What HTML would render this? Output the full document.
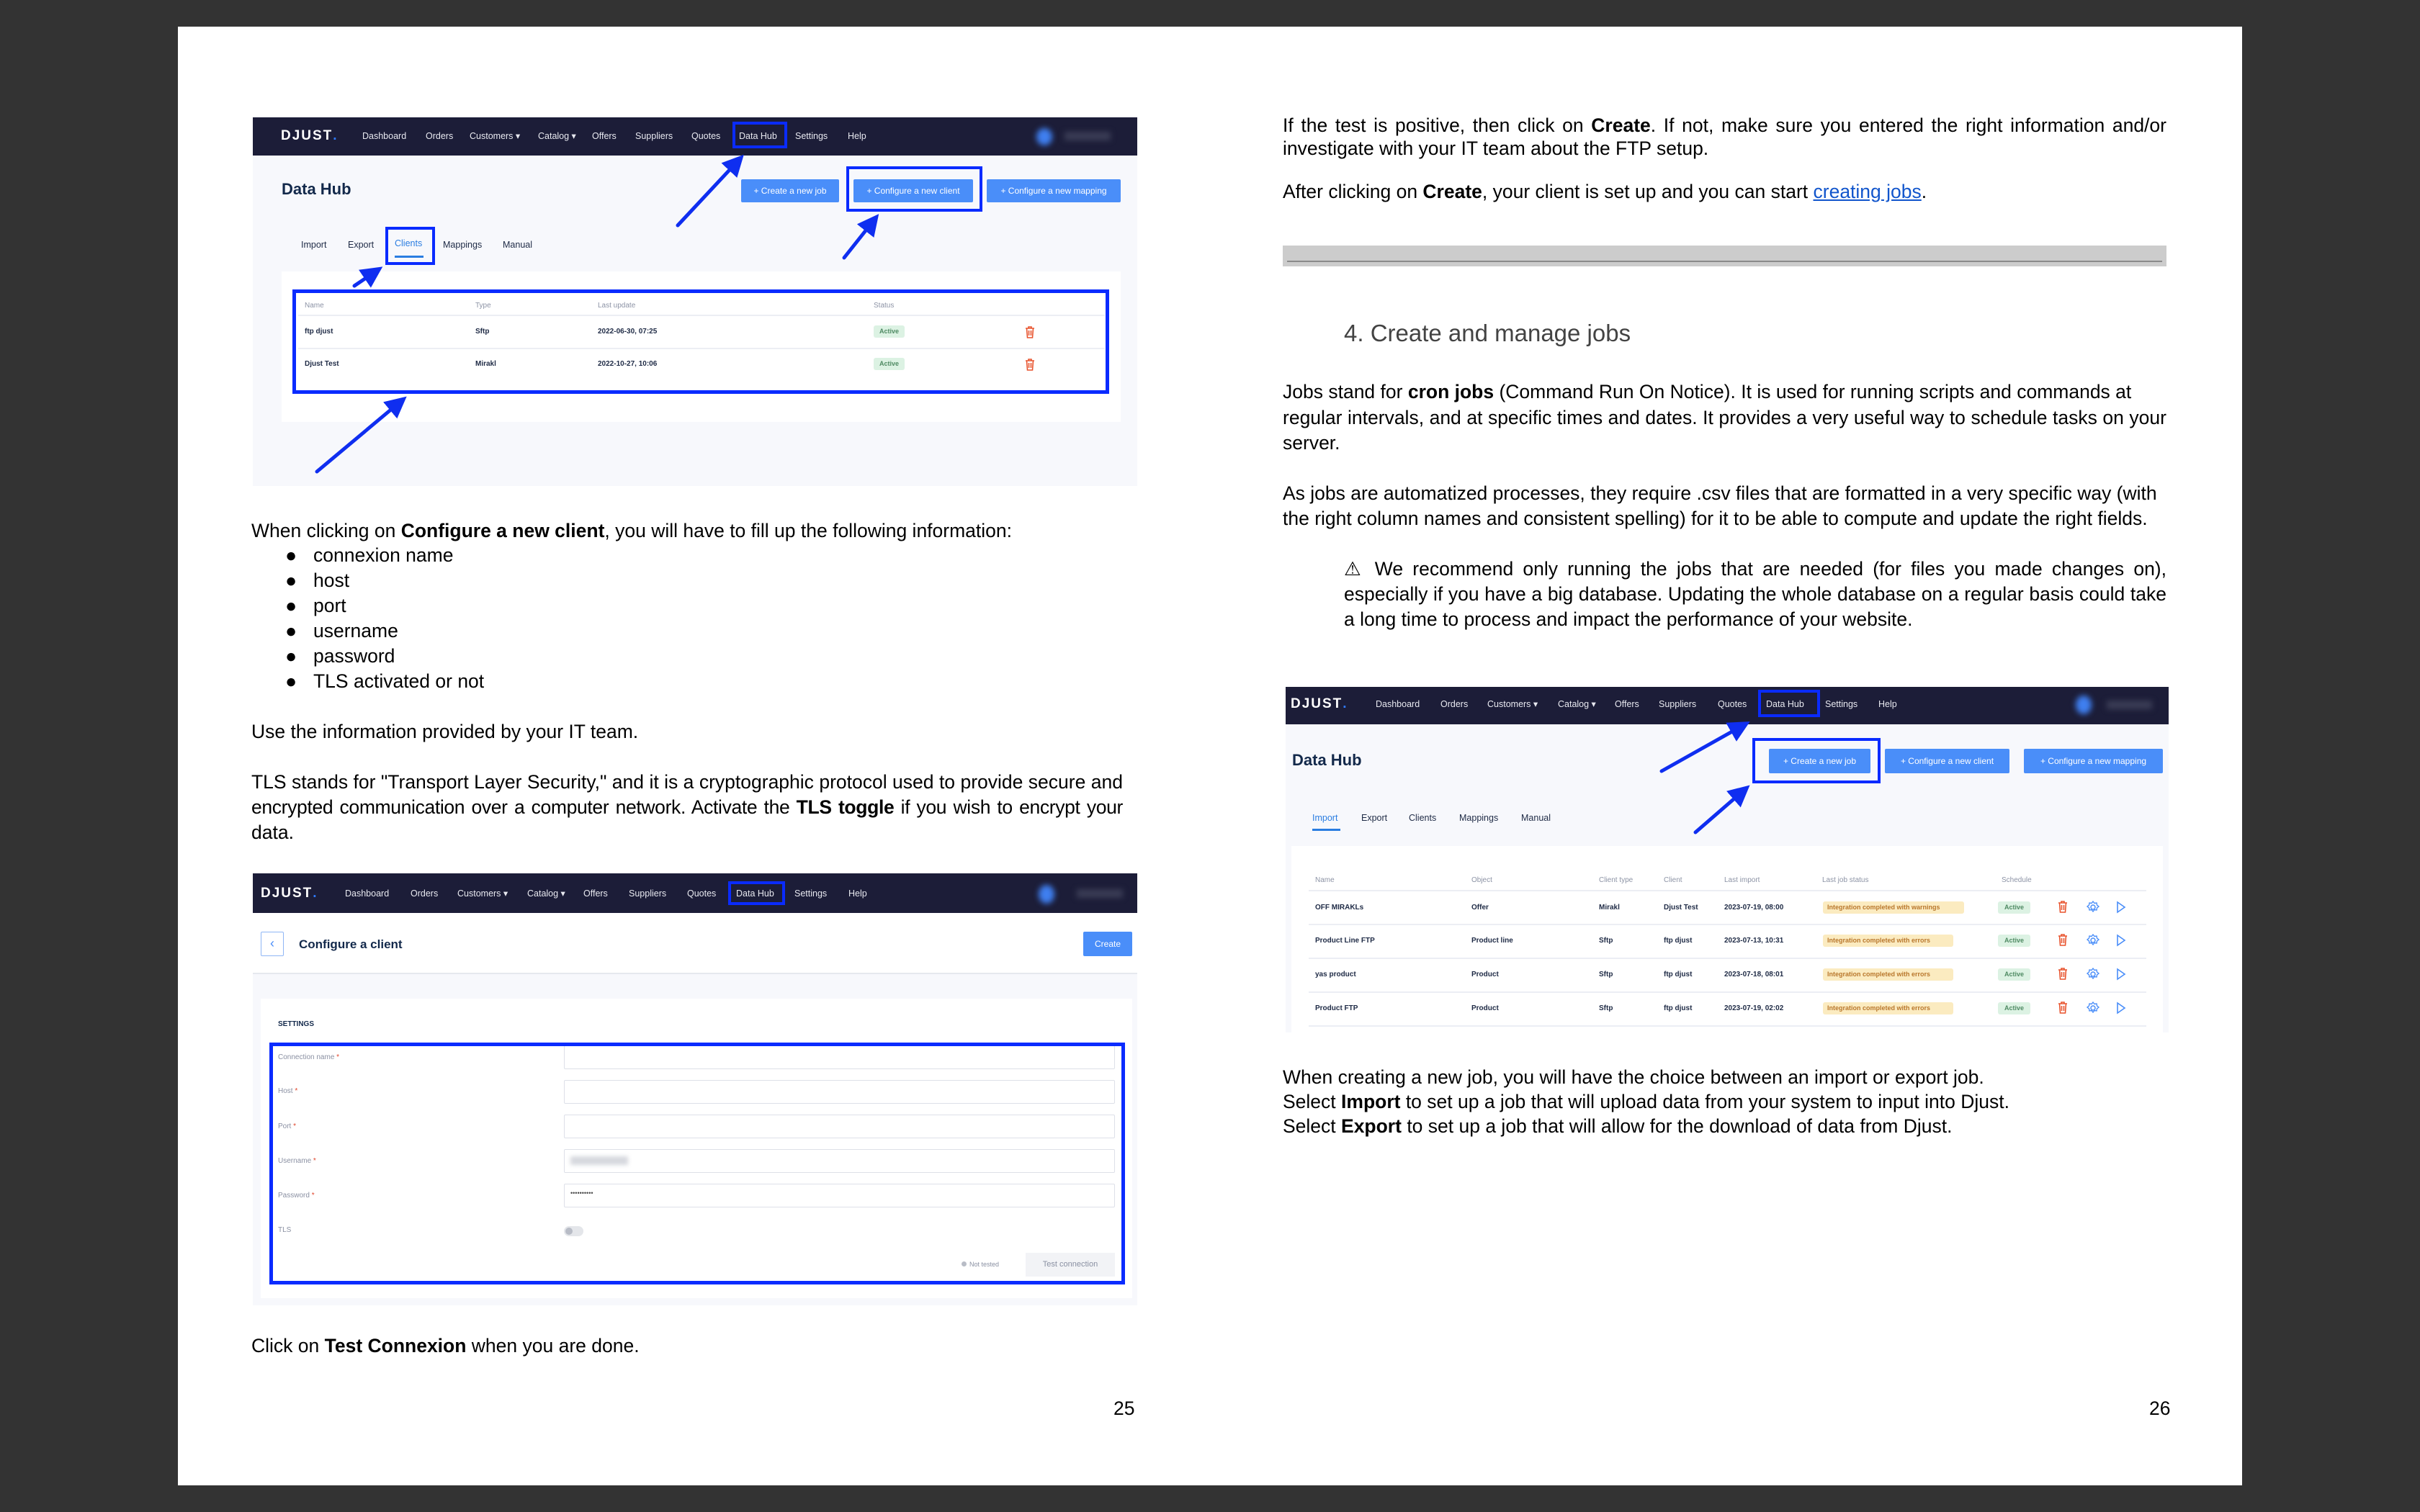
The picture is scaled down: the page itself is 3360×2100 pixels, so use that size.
<!DOCTYPE html>
<html><head><meta charset="utf-8">
<style>
*{margin:0;padding:0;box-sizing:border-box}
html,body{width:3360px;height:2100px;overflow:hidden;background:#333333}
body{position:relative;font-family:"Liberation Sans",Arial,sans-serif;color:#000}
.page{position:absolute;left:247px;top:37px;width:2866px;height:2026px;background:#fff}
.a{position:absolute;white-space:nowrap}
.t{position:absolute;font-size:26.5px;line-height:35px;white-space:nowrap}
.j{position:absolute;font-size:26.5px;line-height:35px;height:35px;overflow:visible;text-align:justify;text-align-last:justify;white-space:normal}
.s{position:absolute;font-family:"Liberation Sans",Arial,sans-serif}
.nav{background:#1c1d38}
.ni{position:absolute;color:#e8e9f0;font-size:12.5px;line-height:16px;white-space:nowrap}
.logo{position:absolute;color:#fff;font-weight:bold;font-size:19px;letter-spacing:2px;line-height:20px}
.logo b{color:#2f7bff}
.hb{position:absolute;border:4px solid #0a2bff}
.btn{position:absolute;background:#4a8ef9;color:#fff;font-size:12px;text-align:center;border-radius:2px}
.th{position:absolute;color:#8c93a5;font-size:10px;line-height:12px;white-space:nowrap}
.td{position:absolute;color:#1e2a45;font-size:10px;font-weight:bold;line-height:12px;white-space:nowrap}
.hl{position:absolute;height:2px;background:#eceef4}
.act{position:absolute;background:#dcf2e3;color:#4f8a63;font-size:9px;font-weight:bold;text-align:center;border-radius:3px}
.warn{position:absolute;background:#fbebc0;color:#b9772c;font-size:9px;font-weight:bold;border-radius:3px;padding-left:6px;white-space:nowrap}
.lbl{position:absolute;color:#8a90a2;font-size:10px;line-height:12px}
.lbl b{color:#e0452b;font-weight:normal}
.inp{position:absolute;background:#fff;border:1.5px solid #dde0e8;border-radius:2px}
</style></head><body>
<div class="page"></div>

<!-- Screenshot 1 -->
<div class="s" style="left:351px;top:161px;width:1228px;height:514px;background:#f7f8fc"></div>
<div class="s nav" style="left:351px;top:163px;width:1228px;height:53px"></div>
<div class="logo" style="left:390px;top:179px">DJUST<b>.</b></div>
<div class="ni" style="left:503px;top:181px">Dashboard</div>
<div class="ni" style="left:591px;top:181px">Orders</div>
<div class="ni" style="left:652px;top:181px">Customers ▾</div>
<div class="ni" style="left:747px;top:181px">Catalog ▾</div>
<div class="ni" style="left:822px;top:181px">Offers</div>
<div class="ni" style="left:882px;top:181px">Suppliers</div>
<div class="ni" style="left:960px;top:181px">Quotes</div>
<div class="ni" style="left:1026px;top:181px">Data Hub</div>
<div class="ni" style="left:1104px;top:181px">Settings</div>
<div class="ni" style="left:1177px;top:181px">Help</div>
<div class="hb" style="left:1017px;top:169px;width:76px;height:37px"></div>
<div class="s" style="left:1439px;top:178px;width:22px;height:24px;border-radius:50%;background:#3f7ff0;filter:blur(4px)"></div>
<div class="s" style="left:1478px;top:183px;width:64px;height:12px;background:#3a3c55;filter:blur(4px)"></div>
<div class="a" style="left:391px;top:250px;font-size:22px;font-weight:bold;color:#13294b">Data Hub</div>
<div class="btn" style="left:1029px;top:249px;width:136px;height:32px;line-height:32px">+ Create a new job</div>
<div class="btn" style="left:1185px;top:249px;width:166px;height:32px;line-height:32px">+ Configure a new client</div>
<div class="btn" style="left:1370px;top:249px;width:186px;height:32px;line-height:32px">+ Configure a new mapping</div>
<div class="hb" style="left:1175px;top:231px;width:189px;height:63px"></div>
<div class="ni" style="left:418px;top:332px;color:#1e2a45">Import</div>
<div class="ni" style="left:483px;top:332px;color:#1e2a45">Export</div>
<div class="ni" style="left:548px;top:330px;color:#2a7de1">Clients</div>
<div class="ni" style="left:615px;top:332px;color:#1e2a45">Mappings</div>
<div class="ni" style="left:698px;top:332px;color:#1e2a45">Manual</div>
<div class="s" style="left:548px;top:355px;width:40px;height:3px;background:#2a7de1"></div>
<div class="hb" style="left:535px;top:315px;width:69px;height:53px"></div>
<div class="s" style="left:391px;top:377px;width:1165px;height:209px;background:#fff"></div>
<div class="th" style="left:423px;top:419px">Name</div>
<div class="th" style="left:660px;top:419px">Type</div>
<div class="th" style="left:830px;top:419px">Last update</div>
<div class="th" style="left:1213px;top:419px">Status</div>
<div class="hl" style="left:414px;top:437px;width:1120px"></div>
<div class="td" style="left:423px;top:455px">ftp djust</div>
<div class="td" style="left:660px;top:455px">Sftp</div>
<div class="td" style="left:830px;top:455px">2022-06-30, 07:25</div>
<div class="act" style="left:1213px;top:452px;width:43px;height:17px;line-height:17px">Active</div>
<div class="hl" style="left:414px;top:483px;width:1120px"></div>
<div class="td" style="left:423px;top:500px">Djust Test</div>
<div class="td" style="left:660px;top:500px">Mirakl</div>
<div class="td" style="left:830px;top:500px">2022-10-27, 10:06</div>
<div class="act" style="left:1213px;top:497px;width:43px;height:17px;line-height:17px">Active</div>
<svg class="s" style="left:1422px;top:452px" width="16" height="18" viewBox="0 0 16 18"><path d="M2 4h12M6 4V2h4v2M3.5 4l1 13h7l1-13M6.5 7v7M9.5 7v7" fill="none" stroke="#e8542e" stroke-width="1.6"/></svg>
<svg class="s" style="left:1422px;top:497px" width="16" height="18" viewBox="0 0 16 18"><path d="M2 4h12M6 4V2h4v2M3.5 4l1 13h7l1-13M6.5 7v7M9.5 7v7" fill="none" stroke="#e8542e" stroke-width="1.6"/></svg>
<div class="hb" style="left:406px;top:402px;width:1134px;height:145px;border-width:5px"></div>

<!-- Left text -->
<div class="t" style="left:349px;top:720px">When clicking on <b>Configure a new client</b>, you will have to fill up the following information:</div>
<div class="t" style="left:396px;top:754px">●</div><div class="t" style="left:435px;top:754px">connexion name</div>
<div class="t" style="left:396px;top:789px">●</div><div class="t" style="left:435px;top:789px">host</div>
<div class="t" style="left:396px;top:824px">●</div><div class="t" style="left:435px;top:824px">port</div>
<div class="t" style="left:396px;top:859px">●</div><div class="t" style="left:435px;top:859px">username</div>
<div class="t" style="left:396px;top:894px">●</div><div class="t" style="left:435px;top:894px">password</div>
<div class="t" style="left:396px;top:929px">●</div><div class="t" style="left:435px;top:929px">TLS activated or not</div>
<div class="t" style="left:349px;top:999px">Use the information provided by your IT team.</div>
<div class="j" style="left:349px;top:1069px;width:1210px">TLS stands for "Transport Layer Security," and it is a cryptographic protocol used to provide secure and</div>
<div class="j" style="left:349px;top:1104px;width:1210px;letter-spacing:-0.35px">encrypted communication over a computer network. Activate the <b>TLS toggle</b> if you wish to encrypt your</div>
<div class="t" style="left:349px;top:1139px">data.</div>

<!-- Screenshot 2 -->
<div class="s" style="left:351px;top:1213px;width:1228px;height:600px;background:#f7f8fc"></div>
<div class="s nav" style="left:351px;top:1213px;width:1228px;height:55px"></div>
<div class="logo" style="left:362px;top:1231px">DJUST<b>.</b></div>
<div class="ni" style="left:479px;top:1233px">Dashboard</div>
<div class="ni" style="left:570px;top:1233px">Orders</div>
<div class="ni" style="left:635px;top:1233px">Customers ▾</div>
<div class="ni" style="left:732px;top:1233px">Catalog ▾</div>
<div class="ni" style="left:810px;top:1233px">Offers</div>
<div class="ni" style="left:873px;top:1233px">Suppliers</div>
<div class="ni" style="left:954px;top:1233px">Quotes</div>
<div class="ni" style="left:1022px;top:1233px">Data Hub</div>
<div class="ni" style="left:1103px;top:1233px">Settings</div>
<div class="ni" style="left:1178px;top:1233px">Help</div>
<div class="hb" style="left:1011px;top:1224px;width:79px;height:33px"></div>
<div class="s" style="left:1442px;top:1229px;width:22px;height:26px;border-radius:50%;background:#3f7ff0;filter:blur(4px)"></div>
<div class="s" style="left:1495px;top:1235px;width:64px;height:12px;background:#3a3c55;filter:blur(4px)"></div>
<div class="s" style="left:351px;top:1268px;width:1228px;height:85px;background:#fff;border-bottom:2px solid #e6e8ee"></div>
<div class="s" style="left:362px;top:1294px;width:32px;height:34px;border:1.5px solid #8fb6f5;border-radius:2px;color:#4a8ef9;font-size:18px;line-height:30px;text-align:center">‹</div>
<div class="a" style="left:415px;top:1302px;font-size:17px;font-weight:bold;color:#13294b">Configure a client</div>
<div class="btn" style="left:1504px;top:1294px;width:68px;height:34px;line-height:34px">Create</div>
<div class="s" style="left:362px;top:1387px;width:1210px;height:416px;background:#fff"></div>
<div class="a" style="left:386px;top:1417px;font-size:10px;font-weight:bold;color:#13294b">SETTINGS</div>
<div class="lbl" style="left:386px;top:1463px">Connection name <b>*</b></div>
<div class="lbl" style="left:386px;top:1510px">Host <b>*</b></div>
<div class="lbl" style="left:386px;top:1559px">Port <b>*</b></div>
<div class="lbl" style="left:386px;top:1607px">Username <b>*</b></div>
<div class="lbl" style="left:386px;top:1655px">Password <b>*</b></div>
<div class="lbl" style="left:386px;top:1703px">TLS</div>
<div class="inp" style="left:783px;top:1452px;width:765px;height:33px"></div>
<div class="inp" style="left:783px;top:1500px;width:765px;height:33px"></div>
<div class="inp" style="left:783px;top:1548px;width:765px;height:33px"></div>
<div class="inp" style="left:783px;top:1596px;width:765px;height:33px"></div>
<div class="s" style="left:792px;top:1606px;width:80px;height:12px;background:#d6d8de;filter:blur(3px)"></div>
<div class="inp" style="left:783px;top:1644px;width:765px;height:33px"></div>
<div class="a" style="left:792px;top:1652px;font-size:9px;color:#444">••••••••••</div>
<div class="s" style="left:783px;top:1703px;width:27px;height:14px;border-radius:7px;background:#e4e6ea"></div>
<div class="s" style="left:785px;top:1705px;width:10px;height:10px;border-radius:5px;background:#b8bcc6"></div>
<div class="s" style="left:1335px;top:1752px;width:7px;height:7px;border-radius:4px;background:#b8bcc6"></div>
<div class="lbl" style="left:1346px;top:1750px;font-size:9px">Not tested</div>
<div class="s" style="left:1424px;top:1740px;width:124px;height:33px;background:#f2f3f6;color:#8a90a2;font-size:11px;line-height:33px;text-align:center">Test connection</div>
<div class="hb" style="left:374px;top:1448px;width:1188px;height:336px;border-width:5px"></div>

<div class="t" style="left:349px;top:1852px">Click on <b>Test Connexion</b> when you are done.</div>
<div class="t" style="left:1546px;top:1939px">25</div>

<!-- RIGHT PAGE -->
<div class="j" style="left:1781px;top:157px;width:1227px">If the test is positive, then click on <b>Create</b>. If not, make sure you entered the right information and/or</div>
<div class="t" style="left:1781px;top:189px">investigate with your IT team about the FTP setup.</div>
<div class="t" style="left:1781px;top:249px">After clicking on <b>Create</b>, your client is set up and you can start <span style="color:#1155cc;text-decoration:underline">creating jobs</span>.</div>
<div class="s" style="left:1781px;top:341px;width:1227px;height:29px;background:#cccccc"></div>
<div class="s" style="left:1787px;top:362px;width:1215px;height:2px;background:#8a8a8a"></div>
<div class="a" style="left:1866px;top:444px;font-size:33px;color:#434343">4. Create and manage jobs</div>
<div class="t" style="left:1781px;top:527px">Jobs stand for <b>cron jobs</b> (Command Run On Notice). It is used for running scripts and commands at</div>
<div class="j" style="left:1781px;top:563px;width:1227px">regular intervals, and at specific times and dates. It provides a very useful way to schedule tasks on your</div>
<div class="t" style="left:1781px;top:598px">server.</div>
<div class="t" style="left:1781px;top:668px">As jobs are automatized processes, they require .csv files that are formatted in a very specific way (with</div>
<div class="t" style="left:1781px;top:703px">the right column names and consistent spelling) for it to be able to compute and update the right fields.</div>
<div class="j" style="left:1866px;top:773px;width:1142px">⚠ We recommend only running the jobs that are needed (for files you made changes on),</div>
<div class="j" style="left:1866px;top:808px;width:1142px">especially if you have a big database. Updating the whole database on a regular basis could take</div>
<div class="t" style="left:1866px;top:843px">a long time to process and impact the performance of your website.</div>

<!-- Screenshot 3 -->
<div class="s" style="left:1785px;top:954px;width:1226px;height:480px;background:#f7f8fc"></div>
<div class="s nav" style="left:1785px;top:954px;width:1226px;height:52px"></div>
<div class="logo" style="left:1792px;top:968px">DJUST<b>.</b></div>
<div class="ni" style="left:1910px;top:970px">Dashboard</div>
<div class="ni" style="left:2000px;top:970px">Orders</div>
<div class="ni" style="left:2065px;top:970px">Customers ▾</div>
<div class="ni" style="left:2163px;top:970px">Catalog ▾</div>
<div class="ni" style="left:2242px;top:970px">Offers</div>
<div class="ni" style="left:2303px;top:970px">Suppliers</div>
<div class="ni" style="left:2385px;top:970px">Quotes</div>
<div class="ni" style="left:2452px;top:970px">Data Hub</div>
<div class="ni" style="left:2534px;top:970px">Settings</div>
<div class="ni" style="left:2608px;top:970px">Help</div>
<div class="hb" style="left:2441px;top:958px;width:86px;height:38px"></div>
<div class="s" style="left:2882px;top:966px;width:22px;height:26px;border-radius:50%;background:#3f7ff0;filter:blur(4px)"></div>
<div class="s" style="left:2925px;top:973px;width:63px;height:12px;background:#3a3c55;filter:blur(4px)"></div>
<div class="a" style="left:1794px;top:1043px;font-size:22px;font-weight:bold;color:#13294b">Data Hub</div>
<div class="btn" style="left:2456px;top:1040px;width:141px;height:34px;line-height:34px">+ Create a new job</div>
<div class="btn" style="left:2617px;top:1040px;width:173px;height:34px;line-height:34px">+ Configure a new client</div>
<div class="btn" style="left:2810px;top:1040px;width:193px;height:34px;line-height:34px">+ Configure a new mapping</div>
<div class="hb" style="left:2433px;top:1025px;width:178px;height:63px"></div>
<div class="ni" style="left:1822px;top:1128px;color:#2a7de1">Import</div>
<div class="ni" style="left:1890px;top:1128px;color:#1e2a45">Export</div>
<div class="ni" style="left:1956px;top:1128px;color:#1e2a45">Clients</div>
<div class="ni" style="left:2026px;top:1128px;color:#1e2a45">Mappings</div>
<div class="ni" style="left:2112px;top:1128px;color:#1e2a45">Manual</div>
<div class="s" style="left:1822px;top:1151px;width:39px;height:3px;background:#2a7de1"></div>
<div class="s" style="left:1793px;top:1175px;width:1210px;height:259px;background:#fff"></div>
<div class="th" style="left:1826px;top:1217px">Name</div>
<div class="th" style="left:2043px;top:1217px">Object</div>
<div class="th" style="left:2220px;top:1217px">Client type</div>
<div class="th" style="left:2310px;top:1217px">Client</div>
<div class="th" style="left:2394px;top:1217px">Last import</div>
<div class="th" style="left:2530px;top:1217px">Last job status</div>
<div class="th" style="left:2779px;top:1217px">Schedule</div>
<div class="hl" style="left:1817px;top:1236px;width:1163px"></div>

<div class="td" style="left:1826px;top:1255px">OFF MIRAKLs</div><div class="td" style="left:2043px;top:1255px">Offer</div><div class="td" style="left:2220px;top:1255px">Mirakl</div><div class="td" style="left:2310px;top:1255px">Djust Test</div><div class="td" style="left:2394px;top:1255px">2023-07-19, 08:00</div>
<div class="warn" style="left:2531px;top:1252px;width:196px;height:17px;line-height:17px">Integration completed with warnings</div>
<div class="act" style="left:2774px;top:1252px;width:45px;height:17px;line-height:17px">Active</div>
<div class="hl" style="left:1817px;top:1283px;width:1163px"></div>

<div class="td" style="left:1826px;top:1301px">Product Line FTP</div><div class="td" style="left:2043px;top:1301px">Product line</div><div class="td" style="left:2220px;top:1301px">Sftp</div><div class="td" style="left:2310px;top:1301px">ftp djust</div><div class="td" style="left:2394px;top:1301px">2023-07-13, 10:31</div>
<div class="warn" style="left:2531px;top:1298px;width:181px;height:17px;line-height:17px">Integration completed with errors</div>
<div class="act" style="left:2774px;top:1298px;width:45px;height:17px;line-height:17px">Active</div>
<div class="hl" style="left:1817px;top:1330px;width:1163px"></div>

<div class="td" style="left:1826px;top:1348px">yas product</div><div class="td" style="left:2043px;top:1348px">Product</div><div class="td" style="left:2220px;top:1348px">Sftp</div><div class="td" style="left:2310px;top:1348px">ftp djust</div><div class="td" style="left:2394px;top:1348px">2023-07-18, 08:01</div>
<div class="warn" style="left:2531px;top:1345px;width:181px;height:17px;line-height:17px">Integration completed with errors</div>
<div class="act" style="left:2774px;top:1345px;width:45px;height:17px;line-height:17px">Active</div>
<div class="hl" style="left:1817px;top:1377px;width:1163px"></div>

<div class="td" style="left:1826px;top:1395px">Product FTP</div><div class="td" style="left:2043px;top:1395px">Product</div><div class="td" style="left:2220px;top:1395px">Sftp</div><div class="td" style="left:2310px;top:1395px">ftp djust</div><div class="td" style="left:2394px;top:1395px">2023-07-19, 02:02</div>
<div class="warn" style="left:2531px;top:1392px;width:181px;height:17px;line-height:17px">Integration completed with errors</div>
<div class="act" style="left:2774px;top:1392px;width:45px;height:17px;line-height:17px">Active</div>
<div class="hl" style="left:1817px;top:1424px;width:1163px"></div>

<svg class="s" style="left:2856px;top:1250px" width="110" height="160" viewBox="0 0 110 160">
<defs>
<g id="ic">
<path d="M2 4h12M6 4V2h4v2M3.5 4l1 13h7l1-13M6.5 7v7M9.5 7v7" fill="none" stroke="#e8542e" stroke-width="1.6"/>
<circle cx="50" cy="10" r="3" fill="none" stroke="#4a8ef9" stroke-width="1.5"/>
<path d="M50 2l2 2.5 3-.5.5 3 2.5 2-2.5 2-.5 3-3-.5-2 2.5-2-2.5-3 .5-.5-3-2.5-2 2.5-2 .5-3 3 .5z" fill="none" stroke="#4a8ef9" stroke-width="1.4"/>
<path d="M84 3l10 7-10 7z" fill="none" stroke="#4a8ef9" stroke-width="1.6"/>
</g>
</defs>
<use href="#ic" x="0" y="0"/>
<use href="#ic" x="0" y="46"/>
<use href="#ic" x="0" y="93"/>
<use href="#ic" x="0" y="140"/>
</svg>

<div class="t" style="left:1781px;top:1479px">When creating a new job, you will have the choice between an import or export job.</div>
<div class="t" style="left:1781px;top:1513px">Select <b>Import</b> to set up a job that will upload data from your system to input into Djust.</div>
<div class="t" style="left:1781px;top:1547px">Select <b>Export</b> to set up a job that will allow for the download of data from Djust.</div>
<div class="t" style="left:2984px;top:1939px">26</div>

<svg class="s" style="left:0;top:0" width="3360" height="2100">
<defs><marker id="ah" markerWidth="6" markerHeight="6" refX="4" refY="3" orient="auto" markerUnits="strokeWidth"><path d="M0 0L6 3L0 6z" fill="#0f2ef0"/></marker></defs>
<g stroke="#0f2ef0" stroke-width="5" stroke-linecap="round" marker-end="url(#ah)">
<line x1="941" y1="313" x2="1026" y2="222"/>
<line x1="1172" y1="358" x2="1214" y2="305"/>
<line x1="492" y1="397" x2="523" y2="376"/>
<line x1="440" y1="655" x2="557" y2="557"/>
<line x1="2307" y1="1071" x2="2421" y2="1007"/>
<line x1="2354" y1="1156" x2="2422" y2="1097"/>
</g>
</svg>
</body></html>
